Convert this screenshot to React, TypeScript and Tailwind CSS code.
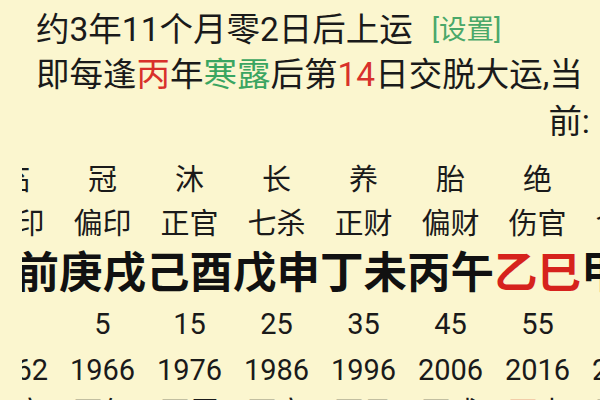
const FONT = "font-['Roboto','Noto_Sans_CJK_SC',sans-serif]";

const STAGES = ["临", "冠", "沐", "长", "养", "胎", "绝", "墓"];
const GODS = ["正印", "偏印", "正官", "七杀", "正财", "偏财", "伤官", "食神"];
const PILLARS: [string, string, boolean][] = [
  ["", "前", false],
  ["庚", "戌", false],
  ["己", "酉", false],
  ["戊", "申", false],
  ["丁", "未", false],
  ["丙", "午", false],
  ["乙", "巳", true],
  ["甲", "辰", false],
];
const AGES = ["", "5", "15", "25", "35", "45", "55", "65"];
const YEARS = ["1962", "1966", "1976", "1986", "1996", "2006", "2016", "2026"];
const FLOW: [string, string, boolean][] = [
  ["壬", "寅", false],
  ["丙", "午", false],
  ["丙", "辰", false],
  ["丙", "寅", false],
  ["丙", "子", false],
  ["丙", "戌", false],
  ["丙", "申", true],
  ["丙", "午", false],
];

function Row({ h, children }: { h: string; children: React.ReactNode }) {
  return <div className={`flex items-center ${h}`}>{children}</div>;
}

function Cell({ children }: { children: React.ReactNode }) {
  return (
    <div className="flex w-[87px] shrink-0 justify-center whitespace-nowrap">
      {children}
    </div>
  );
}

export default function App() {
  return (
    <div className={`h-[400px] w-[600px] overflow-hidden bg-[#fbf6cf] text-[#1a1a1a] ${FONT}`}>
      <div className="pt-[7px]">
        <div className="flex h-[45px] items-center pl-[36px] text-[33.5px] leading-none">
          <span>约3年11个月零2日后上运</span>
          <span className="ml-[19px] text-[27.5px] text-[#4aa86a]">[设置]</span>
        </div>
        <div className="flex h-[46px] items-center pl-[36px] text-[33.5px] leading-none">
          <span>即每逢</span>
          <span className="text-[#d8312b]">丙</span>
          <span>年</span>
          <span className="text-[#3aa561]">寒露</span>
          <span>后第</span>
          <span className="text-[#d8312b]">14</span>
          <span>日交脱大运,当</span>
        </div>
        <div className="flex h-[48px] items-center justify-end pr-[10px] text-[33.5px] leading-none">
          前:
        </div>
      </div>

      <div className="ml-[22px] mt-[13px] overflow-hidden">
        <div className="-ml-[50px] leading-none">
          <Row h="h-[42px] text-[29px]">
            {STAGES.map((s, i) => (
              <Cell key={i}>{s}</Cell>
            ))}
          </Row>
          <Row h="h-[46px] text-[29px]">
            {GODS.map((s, i) => (
              <Cell key={i}>{s}</Cell>
            ))}
          </Row>
          <Row h="h-[53px] text-[43.5px] font-bold text-[#111]">
            {PILLARS.map(([a, b, red], i) => (
              <Cell key={i}>
                <span className={`w-[43.5px] text-center ${red ? "text-[#d6221c]" : ""}`}>{a}</span>
                <span className={`w-[43.5px] text-center ${red ? "text-[#d6221c]" : ""}`}>{b}</span>
              </Cell>
            ))}
          </Row>
          <Row h="h-[48px] text-[29px]">
            {AGES.map((s, i) => (
              <Cell key={i}>{s}</Cell>
            ))}
          </Row>
          <Row h="h-[44px] text-[29px]">
            {YEARS.map((s, i) => (
              <Cell key={i}>{s}</Cell>
            ))}
          </Row>
          <Row h="h-[42px] text-[29px]">
            {FLOW.map(([a, b, red], i) => (
              <Cell key={i}>
                <span className={red ? "text-[#e0553a]" : ""}>{a}</span>
                <span>{b}</span>
              </Cell>
            ))}
          </Row>
        </div>
      </div>
    </div>
  );
}
